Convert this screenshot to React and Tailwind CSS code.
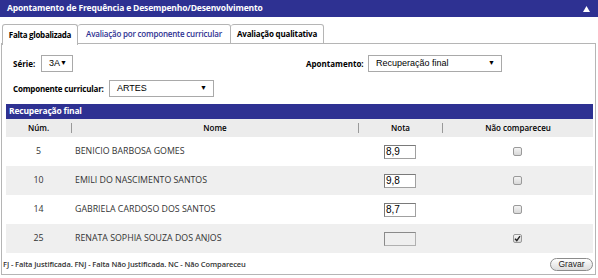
const rows = [
    { num: '5', nome: 'BENICIO BARBOSA GOMES', nota: '8,9', nc: false },
    { num: '10', nome: 'EMILI DO NASCIMENTO SANTOS', nota: '9,8', nc: false },
    { num: '14', nome: 'GABRIELA CARDOSO DOS SANTOS', nota: '8,7', nc: false },
    { num: '25', nome: 'RENATA SOPHIA SOUZA DOS ANJOS', nota: '', nc: true },
]

function Select({ value, className }) {
    return (
        <div className={`flex items-center justify-between border border-[#a9a9a9] bg-white pl-[7px] pr-[6px] text-[9px] text-black font-['Liberation_Sans',Arial,sans-serif] ${className}`}>
            <span>{value}</span>
            <span className="text-[7px]">▼</span>
        </div>
    )
}

function Checkbox({ checked }) {
    return (
        <div className="w-[9px] h-[9px] rounded-[2px] border border-[#9a9a9a] bg-gradient-to-b from-[#f4f4f4] to-[#d8d8d8] flex items-center justify-center">
            {checked && (
                <svg width="7" height="7" viewBox="0 0 7 7">
                    <path d="M1 3.8 L2.8 5.6 L6 1.2" stroke="#222" strokeWidth="1.4" fill="none" />
                </svg>
            )}
        </div>
    )
}

export default function App() {
    return (
        <div className="w-[598px] h-[278px] bg-white font-['Open_Sans',sans-serif] text-[#222] overflow-hidden">

            {/* HEADER */}
            <div className="h-[17px] bg-[#2e3192] flex items-center justify-between pl-[7px] pr-[8px]">
                <span className="text-white font-bold text-[8.5px] tracking-[-0.15px]">
                    Apontamento de Frequência e Desempenho/Desenvolvimento
                </span>
                <svg width="7" height="6" viewBox="0 0 7 6">
                    <path d="M3.5 0 L7 6 L0 6 Z" fill="#fff" />
                </svg>
            </div>

            {/* TABS */}
            <div className="flex pl-[2px] mt-[7px] h-[20px] whitespace-nowrap">
                <div className="w-[76px] h-[21px] border border-[#b5b5b5] border-b-0 rounded-t-[3px] bg-white flex items-center justify-center text-[8px] font-bold text-black z-10 tracking-[-0.3px]">
                    Falta globalizada
                </div>
                <div className="w-[153px] border border-l-0 border-[#b5b5b5] rounded-t-[3px] bg-white flex items-center justify-center text-[8px] font-semibold text-[#2e3192] tracking-[-0.2px]">
                    Avaliação por componente curricular
                </div>
                <div className="w-[93px] border border-l-0 border-[#b5b5b5] rounded-t-[3px] bg-white flex items-center justify-center text-[8px] font-bold text-black tracking-[-0.2px]">
                    Avaliação qualitativa
                </div>
            </div>

            {/* PANEL */}
            <div className="ml-[1px] w-[595px] h-[232px] border border-[#b5b5b5] -mt-[1px] flex flex-col whitespace-nowrap">

                <div className="flex items-center pl-[11px] mt-[11px] h-[17px]">
                    <span className="text-[8px] font-bold text-black w-[28px]">Série:</span>
                    <Select value="3A" className="w-[32px] h-[17px]" />
                    <span className="text-[8px] font-bold text-black ml-[233px] w-[62px]">Apontamento:</span>
                    <Select value="Recuperação final" className="w-[134px] h-[17px]" />
                </div>

                <div className="flex items-center pl-[11px] mt-[8px] h-[17px]">
                    <span className="text-[8px] font-bold text-black w-[96px] tracking-[-0.2px]">Componente curricular:</span>
                    <Select value="ARTES" className="w-[105px] h-[17px]" />
                </div>

                {/* TABLE */}
                <div className="mx-[4px] mt-[7px] w-[587px]">
                    <div className="h-[15px] bg-[#2e3192] flex items-center pl-[3px] text-white font-bold text-[8.5px] tracking-[-0.2px]">
                        Recuperação final
                    </div>
                    <div className="h-[18px] bg-[#ececec] flex items-center text-[8px] font-semibold text-black">
                        <div className="w-[65px] text-center">Núm.</div>
                        <div className="w-[287px] text-center border-l border-[#999] leading-[10px]">Nome</div>
                        <div className="w-[84px] text-center border-l border-[#999] leading-[10px]">Nota</div>
                        <div className="w-[151px] text-center border-l border-[#999] leading-[10px]">Não compareceu</div>
                    </div>
                    {rows.map((r, i) => (
                        <div key={r.num} className={`h-[29px] flex items-center text-[8.8px] text-[#333] ${i % 2 ? 'bg-[#efefef]' : 'bg-white'}`}>
                            <div className="w-[65px] text-center">{r.num}</div>
                            <div className="w-[287px] pl-[4px]">{r.nome}</div>
                            <div className="w-[84px] flex justify-center">
                                {r.nc ? (
                                    <div className="w-[32px] h-[14px] border border-[#b0b0b0] border-t-[#8a8a8a] border-l-[#8a8a8a] bg-[#efefef]" />
                                ) : (
                                    <div className="w-[32px] h-[14px] border border-[#a0a0a0] border-t-[#7a7a7a] border-l-[#7a7a7a] bg-white text-[10px] pl-[1px] leading-[12px] text-black font-['Liberation_Sans',Arial,sans-serif]">
                                        {r.nota}
                                    </div>
                                )}
                            </div>
                            <div className="w-[151px] flex justify-center">
                                <Checkbox checked={r.nc} />
                            </div>
                        </div>
                    ))}
                </div>

                {/* FOOTER */}
                <div className="flex items-center justify-between pl-[1px] pr-[2px] mt-[5px]">
                    <span className="text-[7.5px] font-semibold text-[#333] tracking-[-0.1px]">
                        FJ - Falta Justificada. FNJ - Falta Não Justificada. NC - Não Compareceu
                    </span>
                    <button className="w-[43px] h-[13px] rounded-full border border-[#8c8c8c] bg-gradient-to-b from-white to-[#dcdcdc] text-[8.5px] text-[#222] leading-[11px] font-['Liberation_Sans',Arial,sans-serif]">
                        Gravar
                    </button>
                </div>
            </div>
        </div>
    )
}
